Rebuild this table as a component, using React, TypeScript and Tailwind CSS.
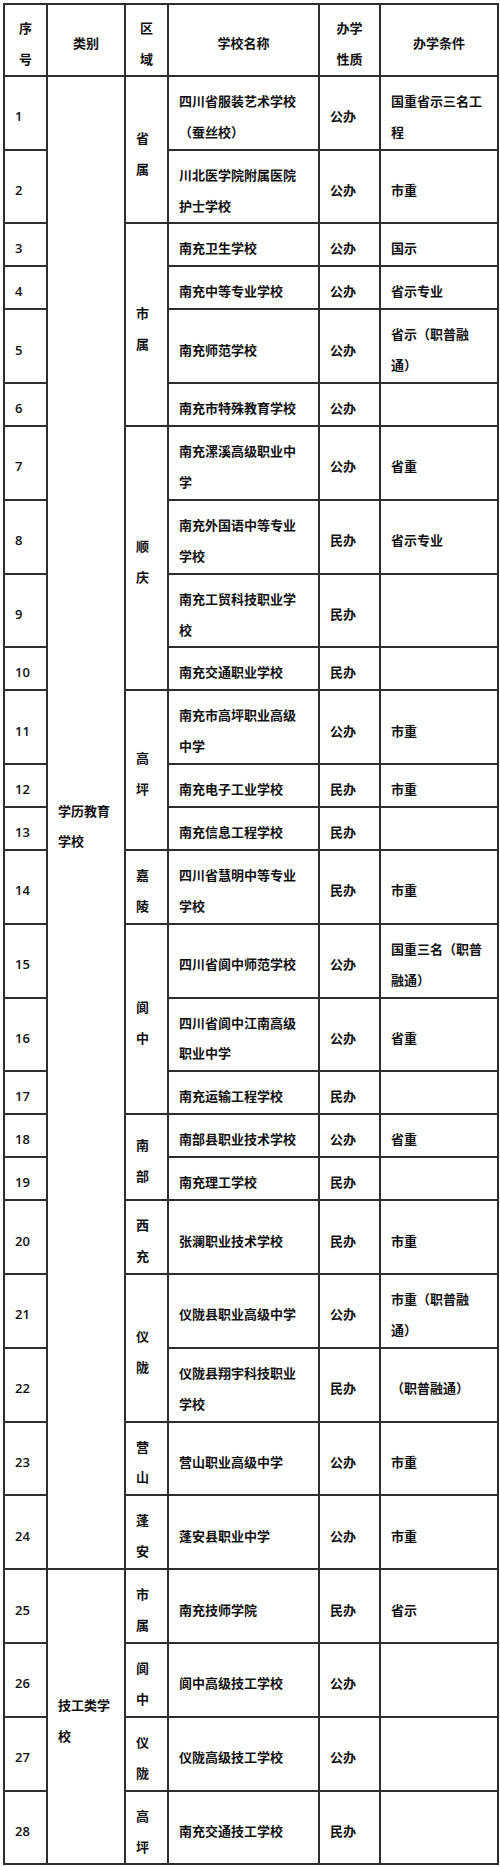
import React from 'react';

interface School {
  seq: number;
  name: string;
  nature: string;
  cond: string;
}

interface RegionGroup {
  region: string;
  schools: School[];
}

interface CategoryGroup {
  category: string;
  regions: RegionGroup[];
}

const data: CategoryGroup[] = [
  {
    category: '学历教育学校',
    regions: [
      {
        region: '省属',
        schools: [
          { seq: 1, name: '四川省服装艺术学校（蚕丝校）', nature: '公办', cond: '国重省示三名工程' },
          { seq: 2, name: '川北医学院附属医院护士学校', nature: '公办', cond: '市重' },
        ],
      },
      {
        region: '市属',
        schools: [
          { seq: 3, name: '南充卫生学校', nature: '公办', cond: '国示' },
          { seq: 4, name: '南充中等专业学校', nature: '公办', cond: '省示专业' },
          { seq: 5, name: '南充师范学校', nature: '公办', cond: '省示（职普融通）' },
          { seq: 6, name: '南充市特殊教育学校', nature: '公办', cond: '' },
        ],
      },
      {
        region: '顺庆',
        schools: [
          { seq: 7, name: '南充漯溪高级职业中学', nature: '公办', cond: '省重' },
          { seq: 8, name: '南充外国语中等专业学校', nature: '民办', cond: '省示专业' },
          { seq: 9, name: '南充工贸科技职业学校', nature: '民办', cond: '' },
          { seq: 10, name: '南充交通职业学校', nature: '民办', cond: '' },
        ],
      },
      {
        region: '高坪',
        schools: [
          { seq: 11, name: '南充市高坪职业高级中学', nature: '公办', cond: '市重' },
          { seq: 12, name: '南充电子工业学校', nature: '民办', cond: '市重' },
          { seq: 13, name: '南充信息工程学校', nature: '民办', cond: '' },
        ],
      },
      {
        region: '嘉陵',
        schools: [{ seq: 14, name: '四川省慧明中等专业学校', nature: '民办', cond: '市重' }],
      },
      {
        region: '阆中',
        schools: [
          { seq: 15, name: '四川省阆中师范学校', nature: '公办', cond: '国重三名（职普融通）' },
          { seq: 16, name: '四川省阆中江南高级职业中学', nature: '公办', cond: '省重' },
          { seq: 17, name: '南充运输工程学校', nature: '民办', cond: '' },
        ],
      },
      {
        region: '南部',
        schools: [
          { seq: 18, name: '南部县职业技术学校', nature: '公办', cond: '省重' },
          { seq: 19, name: '南充理工学校', nature: '民办', cond: '' },
        ],
      },
      {
        region: '西充',
        schools: [{ seq: 20, name: '张澜职业技术学校', nature: '民办', cond: '市重' }],
      },
      {
        region: '仪陇',
        schools: [
          { seq: 21, name: '仪陇县职业高级中学', nature: '公办', cond: '市重（职普融通）' },
          { seq: 22, name: '仪陇县翔宇科技职业学校', nature: '民办', cond: '（职普融通）' },
        ],
      },
      {
        region: '营山',
        schools: [{ seq: 23, name: '营山职业高级中学', nature: '公办', cond: '市重' }],
      },
      {
        region: '蓬安',
        schools: [{ seq: 24, name: '蓬安县职业中学', nature: '公办', cond: '市重' }],
      },
    ],
  },
  {
    category: '技工类学校',
    regions: [
      { region: '市属', schools: [{ seq: 25, name: '南充技师学院', nature: '民办', cond: '省示' }] },
      { region: '阆中', schools: [{ seq: 26, name: '阆中高级技工学校', nature: '公办', cond: '' }] },
      { region: '仪陇', schools: [{ seq: 27, name: '仪陇高级技工学校', nature: '公办', cond: '' }] },
      { region: '高坪', schools: [{ seq: 28, name: '南充交通技工学校', nature: '民办', cond: '' }] },
    ],
  },
];

const cell = 'border-2 border-[#2e2e2e] px-[10px] pt-[9px] pb-[1px] align-middle';
const head = 'border-2 border-[#2e2e2e] px-[10px] pt-[8px] pb-0 align-middle text-center font-semibold';

const App: React.FC = () => {
  return (
    <div
      className="min-h-[1867px] w-[500px] bg-white pt-[3px] pl-[3px] text-[13px] leading-[30.9px] font-semibold text-[#111]"
      style={{ fontFamily: '"Open Sans", "Noto Sans CJK SC", sans-serif' }}
    >
      <table className="w-[494px] table-fixed border-collapse">
        <colgroup>
          <col className="w-[43px]" />
          <col className="w-[78px]" />
          <col className="w-[43px]" />
          <col className="w-[151px]" />
          <col className="w-[61px]" />
          <col className="w-[118px]" />
        </colgroup>
        <thead>
          <tr>
            <th className={head}>
              序<br />号
            </th>
            <th className={head}>类别</th>
            <th className={head}>
              区<br />域
            </th>
            <th className={head}>学校名称</th>
            <th className={head}>
              办学<br />性质
            </th>
            <th className={head}>办学条件</th>
          </tr>
        </thead>
        <tbody>
          {data.map((cat) => {
            const catRows = cat.regions.reduce((n, r) => n + r.schools.length, 0);
            return cat.regions.map((reg, ri) =>
              reg.schools.map((s, si) => (
                <tr key={s.seq}>
                  <td className={cell}>{s.seq}</td>
                  {ri === 0 && si === 0 && (
                    <td className={cell} rowSpan={catRows}>
                      {cat.category}
                    </td>
                  )}
                  {si === 0 && (
                    <td className={cell} rowSpan={reg.schools.length}>
                      {reg.region}
                    </td>
                  )}
                  <td className={cell}>{s.name}</td>
                  <td className={cell}>{s.nature}</td>
                  <td className={cell}>{s.cond}</td>
                </tr>
              ))
            );
          })}
        </tbody>
      </table>
    </div>
  );
};

export default App;
